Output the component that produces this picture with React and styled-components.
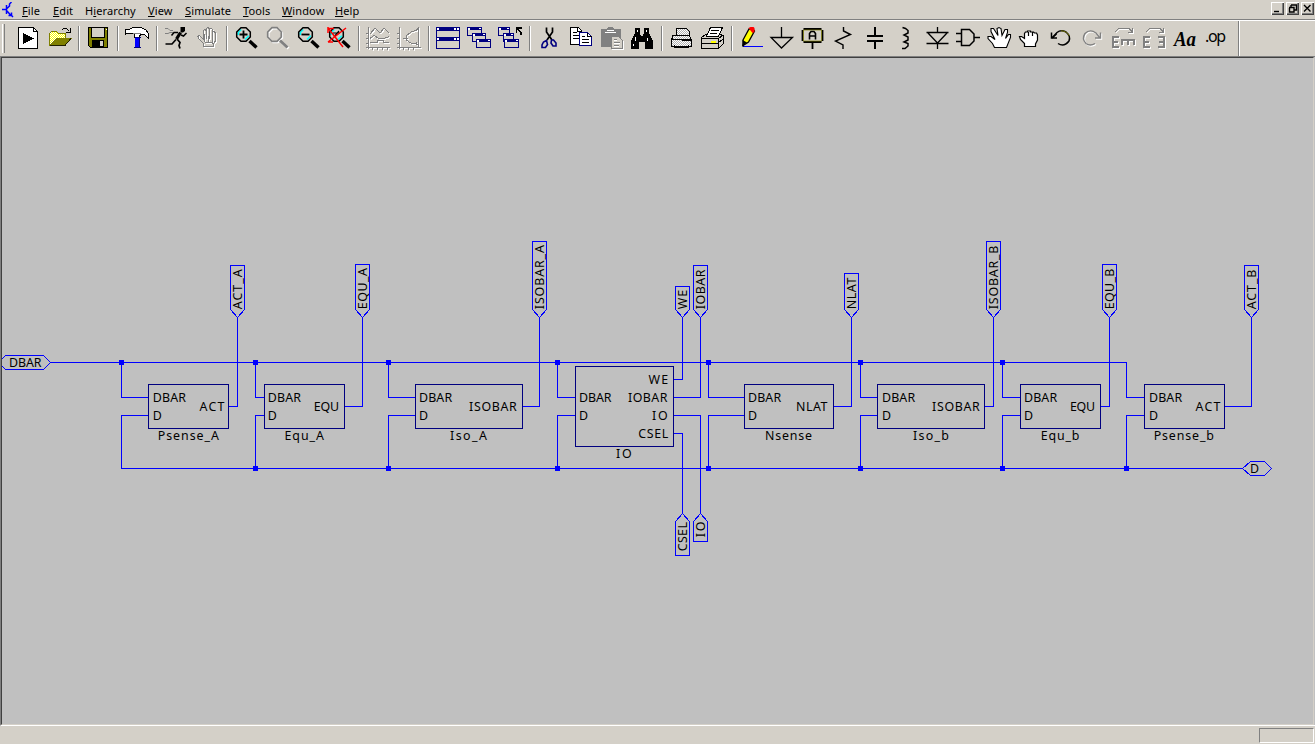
import React from "react";
import styled, { createGlobalStyle } from "styled-components";

const Global = createGlobalStyle`
  * { box-sizing: border-box; }
  html, body { margin: 0; overflow: hidden; background: #d4d0c8; }
  svg { display: block; }
`;

const Window = styled.div`
  width: 1315px;
  height: 744px;
  display: flex;
  flex-direction: column;
  background: #d4d0c8;
  color: #000;
  font-family: "Noto Sans", sans-serif;
`;
const MenuBar = styled.header`
  height: 20px;
  flex: none;
  display: flex;
  align-items: center;
  padding: 1px 1px 0 2px;
  border-bottom: 1px solid #808080;
`;
const AppIcon = styled.svg`
  width: 12px;
  height: 17px;
  margin-right: 8px;
`;
const MenuItem = styled.span`
  width: ${(p) => p.$w}px;
  margin-right: ${(p) => p.$gap}px;
  font-size: 11px;
  line-height: 16px;
  padding-top: 2px;
  letter-spacing: 0.12px;
  white-space: nowrap;
  u { text-underline-offset: 1px; text-decoration-thickness: 1px; }
`;
const Controls = styled.div`
  display: flex;
  gap: 2px;
  margin-left: auto;
  margin-bottom: 3px;
`;
const ControlButton = styled.button`
  width: 13px;
  height: 13px;
  padding: 0;
  border: 0;
  background: #d4d0c8;
  box-shadow: inset 1px 1px #fff, inset -1px -1px #404040, inset -2px -2px #808080;
`;
const Toolbar = styled.nav`
  height: 36px;
  flex: none;
  display: flex;
  align-items: center;
  padding-left: 2px;
  border-top: 1px solid #fff;
`;
const Grip = styled.i`
  width: 3px;
  height: 29px;
  margin-right: 8px;
  border-left: 1px solid #fff;
  border-right: 1px solid #808080;
`;
const Separator = styled.i`
  width: 2px;
  height: 25px;
  margin: 0 3px;
  border-left: 1px solid #808080;
  border-right: 1px solid #fff;
`;
const ToolButton = styled.button`
  width: 31px;
  height: 28px;
  display: flex;
  align-items: center;
  padding: 0 0 2px 3px;
  border: 0;
  background: none;
`;
const Glyph = styled.svg`
  width: 25px;
  height: 24px;
  overflow: visible;
`;
const BandEnd = styled.i`
  width: 2px;
  align-self: stretch;
  margin-left: 6px;
  border-left: 1px solid #808080;
  border-right: 1px solid #fff;
`;
const Workspace = styled.main`
  height: 670px;
  flex: none;
  background: #c0c0c0;
  border-top: 1px solid #808080;
  border-left: 1px solid #808080;
  border-bottom: 1px solid #fff;
`;
const Sheet = styled.div`
  height: 668px;
  width: 1313px;
  border: solid #404040;
  border-width: 1px 0 0 1px;
  border-right: 1px solid #d4d0c8;
  border-bottom: 1px solid #d4d0c8;
`;
const StatusBar = styled.footer`
  flex: 1;
  display: flex;
  justify-content: flex-end;
  padding: 2px 1px 0 0;
`;
const StatusPane = styled.div`
  width: 55px;
  height: 15px;
  border: 1px solid;
  border-color: #808080 #fff #fff #808080;
`;

const K = "#000", G = "#808080", W = "#fff", N = "#000080", O = "#808000";
const S = ({ d, c = K, f = "none", w = 1 }) => <path d={d} stroke={c} fill={f} strokeWidth={w} />;
const F = ({ d, c = K }) => <path d={d} fill={c} />;
const Etched = ({ d, w = 1 }) => (
  <>
    <g transform="translate(1 1)"><S d={d} c={W} w={w} /></g>
    <S d={d} c={G} w={w} />
  </>
);
const Dither = ({ id, a, b }) => (
  <pattern id={id} width="2" height="2" patternUnits="userSpaceOnUse">
    <path d="M0 0h2v2h-2z" fill={a} /><path d="M0 0h1v1h-1zM1 1h1v1h-1z" fill={b} />
  </pattern>
);
const LENS = "M7 1.7h5l4.3 4.3v5l-4.3 4.3h-5l-4.3-4.3v-5z";
const Lens = ({ children }) => (
  <>
    <S d="M4.3 9v-2.5l3-3M11 13.5l3.8-3.8" c="#00ffff" w={1.6} />
    <S d={LENS} w={1.5} />
    <S d="M15.5 15l7 6.5" w={3.4} />
    {children}
  </>
);
const MiniWindow = ({ x, y, w = 14 }) => (
  <g transform={`translate(${x} ${y})`}>
    <rect x=".5" y=".5" width={w} height="8" fill="#d4d0c8" stroke={N} />
    <path d={`M0 0h${w + 1}v3h-${w + 1}z`} fill={N} />
    <path d={`M1 1h2v2h-2zM${w - 2} 1h2v1h-2z`} fill={W} />
  </g>
);

const icons = {
  run: <><S d="M2.5 1.5h15l4 4v17h-19z" f={W} /><S d="M17.5 1.5v4h4" /><F d="M7 7v11l11-5.5z" /></>,
  open: <>
    <defs><Dither id="fold" a="#ffff00" b="#ffffff" /></defs>
    <path d="M2.5 19.5v-12l2-2h5l2 2h7v5h-9z" fill="url(#fold)" stroke="#808000" />
    <S d="M3 19.5L9.5 12.5h14.5l-6 7z" f={O} c={O} /><S d="M3 19.5h15l6-7" c="#202000" />
    <S d="M14.5 4.5l2-2h3l3 3M23.5 2v4.5h-5" />
  </>,
  save: <><S d="M2.5 1.5h19v20h-17l-2-2z" f={O} /><F d="M6 2h13v9h-13z" c="#d4d0c8" /><F d="M20 3h1v1h-1z" c={W} /><S d="M5.5 2v9h13v-9" /><F d="M6 14h12v8h-12z" /><F d="M14 15h3v5h-3z" c="#d4d0c8" /></>,
  hammer: <>
    <F d="M10 11h5v11h-5z" c="#0000ff" /><S d="M14.5 11v11M9 21.500h7" c={N} />
    <path d="M.5 3.500h4l3-2h8l5 2l3 4v5l-3-3l-2-1.500h-3l-1 3h-5.500v-3l-3-1h-3l-2.500 1z" fill={W} stroke={K} />
    <S d="M8 7.500h8" c={G} /><S d="M9.500 11.500h6" c={N} />
  </>,
  runner: <><S d="M1 2.5h3l2 2h3M1 7.5h3l2-1h3" c={G} /><F d="M16.5 1h4.5v4l-2 1.5h-2.5z" /><S d="M16.5 6.5l-4 6.500" w={3.2} /><S d="M14 6.5H10l-2.5 3M17 9l2.500 1l3-3" w={1.5} /><S d="M13 13l3 3.5l-1 3l1 3M12 13.5l-4 4.5H1.500" w={1.7} /></>,
  halt: <Etched d="M8.5 20.5v-3l-4-4l-2-3l2-1l4 4v-9l1-1l2 1v8v-10l1-1l2 1v10v-9l1.5-1l1.5 1v10v-7l1.5-1l1 1v9l-2 3v2zM8 20h10M10 16h8M9.5 8v8M13.5 10v7M17.5 12v6" />,
  zoomIn: <Lens><S d="M9.5 4.5v8M5.5 8.5h8" w={1.8} /></Lens>,
  zoomPan: <><Etched d={LENS} w={1.7} /><Etched d="M15 14.5l7.5 7" w={3} /></>,
  zoomOut: <Lens><S d="M5.5 8.5h8" w={1.8} /></Lens>,
  zoomFit: <><Lens /><S d="M6 7h7M7 11l5-6" w={1.2} /><S d="M1 2l15 19M19 2L1 16M1 1v6M1 2.5h6M1 16h5" c="#ff0000" w={1.5} /></>,
  plot: <Etched d="M2.5 1v22M0 21.5h24M0 17.5h3M0 12.5h3M0 7.5h3M4 8l5-6l5 5l4-5l5 5M4 12.5l4-3l5 3h5l5-2M4 16.5h7v-2h6v2h6M6.5 22v2M11.5 22v2M16.5 22v2M21.5 22v2" />,
  fft: <Etched d="M2.5 1v22M0 21.5h24M0 17.5h3M0 12.5h3M0 7.5h3M22 3.500l-8 2.500l-5 4v4l5 3l8 1.500M21.5 1v20M19 4.500l2.500-3M19 16.500l2.500 3M6 12.500h5M6.5 22v2M11.5 22v2M16.5 22v2" />,
  tile: <><S d="M.5 1.5h23v21h-23z" c={N} /><F d="M0 1h24v4h-24zM0 11h24v4h-24z" c={N} /><F d="M1 2h2v2h-2zM18 2h2v2h-2zM21 2h2v2h-2zM1 12h2v2h-2zM18 12h2v2h-2zM21 12h2v2h-2z" c={W} /></>,
  cascade: <><MiniWindow x={0} y={1} /><MiniWindow x={5} y={7} w={13} /><MiniWindow x={9} y={13} /></>,
  closeAll: <><MiniWindow x={0} y={1} w={11} /><MiniWindow x={5} y={7} w={10} /><MiniWindow x={6} y={13} /><S d="M18.5 7v-5h5M19 2.5l4 4v2" w={1.4} /></>,
  cut: <><S d="M9.5 1.5v4.5l5.5 8M15.5 1.5v4.5l-5.5 8" w={1.7} /><S d="M9.5 14.5l-3 1.5l-1.5 3v2.5h3.5l2-3zM14.5 14h2l2.5 3v3h-3l-2-3z" c={N} w={1.6} /></>,
  copy: <><S d="M2.5 1.5h8l3 3v14h-11z" f={W} /><S d="M9.5 1.5v4h4M5 6.5h4M5 9.5h6M5 12.5h6" /><S d="M11.5 6.5h8l4 4v9h-12z" f={W} c={N} /><S d="M19.5 6.5v4h4M14 10.5h3M14 13.5h7M14 16.5h7" c={K} /></>,
  paste: <><F d="M2 3h6l1-2h5l1 2h7v18h-20z" c={G} /><S d="M6 6.5h11M8 4.5h7" c={W} /><S d="M12.5 10.5h7l4 4v8h-11z" c={G} f="#d4d0c8" /><S d="M13 23.5h11v-9M15 14.5h3M15 17.5h6M15 20.5h5" c={W} /><S d="M15 13.5h3M15 16.5h6M15 19.5h5" c={G} /></>,
  find: <><F d="M5 2h5v5l1 3h2l1-3v-5h5v5l4 8v8h-8v-7h-6v7h-8v-8l4-8z" /><S d="M7.5 4v2M16.5 4v2M5.5 11v4M17.5 12v3M3.5 18v2" c={W} /></>,
  print: <><defs><Dither id="paper" a="#ffffff" b="#b0b0b0" /></defs><path d="M7.5 9.5v-7h10l3 3v4zM3.5 13.5v-4h16l2 2v3zM2.5 13.5h20v7h-20z" fill="url(#paper)" stroke="#000" /><S d="M3.5 10.5l-1 3v5h-1M5.5 18.5v3h14v-3" /></>,
  printSetup: <><S d="M1.5 11.5l4-3h15l3 1v8l-5 5h-17z" f="#d4d0c8" /><S d="M1.5 12.5h17l5-4M1.5 17.5h16l6-5M18.5 12v10" /><S d="M6.5 10.5l4-9h12l-4 9z" f={W} /><S d="M11 4.5h8M10 7.5h7" /><S d="M11 16h5" c="#ffff00" w={2} /></>,
  wire: <><S d="M4 20.5h20" c="#0000ff" /><path d="M4 14l6-11h4l1.500 2l-6 11l-4.500 3z" fill="#ffff00" stroke="#000" strokeWidth="1.3" /><F d="M9.5 2l2-1h3l1 1v4l-2 1z" c="#ff0000" /><F d="M3.5 14l4.500 2.500l-3 2.500v1.500h-2z" /></>,
  ground: <S d="M11.5 1v10M1 11.5h21.500l-11 10.500z" w={1.3} />,
  label: <><S d="M2.5 3h18M2.5 16h18M1.5 4v11M21.5 4v11M11.5 17v6" w={1.8} /><S d="M2.500 4h18v11h-18z" c={O} w={0.7} /><S d="M8.5 13.500v-6l1.500-2h3l1.500 2v6M9 10h5" w={1.6} /></>,
  resistor: <S d="M11.5 1v4l7 3.5l-15 6.500l7.500 4v4" w={1.4} />,
  capacitor: <><S d="M11.5 1v8M11.5 16v7" w={2} /><F d="M4 9h16v2h-16zM4 14h16v2h-16z" /></>,
  inductor: <S d="M8.5 1.500l3 1l2.500 2v2.500l-4 2l4 2v3l-4 2l4 1.500v2.500l-3 2.500h-3" w={1.5} />,
  diode: <S d="M12.5 1v5M1.5 6.5h22M1.5 17.5h22M3 7l9.500 10l9.500-10M12.5 17v6" w={1.3} />,
  gate: <S d="M5.5 3.5h8l4.500 4.500v7l-4.500 4.500h-8zM0 7.5h5M0 15.5h5M18 11.5h6" w={1.5} />,
  move: <S d="M7.5 21.5l-2-4l-4.500-5v-2h3l4 3l-4-8v-3h2.500l4.500 7l-1-7l2-1l2 1l1 7l3-6h2.500v3l-2 6l3-4h2v3l-4 10z" f={W} w={1.1} />,
  drag: <S d="M6.500 20.500v-3l-4-4l-1-3h2l3 2v-5l1-1.500h2v-1h3v1h3l1 1h2l1 2v5l-2 4v2.500zM10.500 6v4M14.500 6v4" f={W} w={1.2} />,
  undo: <><S d="M3 12L8 6.500Q12 3.500 17 6Q22 10 20 15Q15 21.500 9 17.500" w={1.5} /><S d="M2.500 6.500v5.500h5.500M3 12l4.500-4" w={1.5} /><S d="M12 4.800Q18 5 20.500 10" c={O} w={0.8} /></>,
  redo: <Etched d="M20 12L16 7Q10 2.500 5 7.500Q1.500 13 6 17.500Q10 20.500 15 17.500M20.500 6.500v5.500h-5.500" w={1.4} />,
  rotate: <><Etched d="M4 6l4-4h10l3 4M21.5 2v4.5h-5" /><Etched d="M8 11H2v10H8M2 16H7" w={2} /><Etched d="M10 14h14M11 19v-5M17 14v5M23 14v5" w={2} /></>,
  mirror: <><Etched d="M4 6l4-4h10l3 4M21.5 2v4.500h-5" /><Etched d="M8 11H2v10H8M2 16H7" w={2} /><Etched d="M16 11h6v10H16M17 16h5" w={2} /></>,
  text: <text x="1" y="19.5" fontFamily="Liberation Serif" fontSize="20" fontWeight="bold" fontStyle="italic" textLength="22" lengthAdjust="spacingAndGlyphs">Aa</text>,
  op: <text x="1" y="16" fontFamily="Noto Sans" fontSize="16" textLength="21">.op</text>,
};
const smooth = new Set([
  "runner", "zoomIn", "zoomPan", "zoomOut", "zoomFit", "cut", "wire", "ground", "label",
  "resistor", "inductor", "diode", "gate", "move", "drag", "undo", "redo",
]);
const groups = [
  ["run", "open"], ["save"], ["hammer"], ["runner", "halt"],
  ["zoomIn", "zoomPan", "zoomOut", "zoomFit"], ["plot", "fft"],
  ["tile", "cascade", "closeAll"], ["cut", "copy", "paste", "find"],
  ["print", "printSetup"],
  ["wire", "ground", "label", "resistor", "capacitor", "inductor", "diode", "gate", "move", "drag", "undo", "redo", "rotate", "mirror", "text", "op"],
];
const menus = [
  ["F", "ile", "", 19, 12], ["E", "dit", "", 20, 12], ["i", "erarchy", "H", 51, 12],
  ["V", "iew", "", 26, 11], ["S", "imulate", "", 47, 11], ["T", "ools", "", 29, 10],
  ["W", "indow", "", 42, 11], ["H", "elp", "", 26, 0],
];

const Wire = styled.path`
  fill: none;
  stroke: #0000ff;
  shape-rendering: crispEdges;
`;
const Block = styled.rect`
  fill: none;
  stroke: #000080;
  shape-rendering: crispEdges;
`;
const Label = styled.text`
  font: 12.4px "Noto Sans", sans-serif;
  fill: #000;
`;
const T = ({ x, y, to, children }) => (
  <Label x={x - 0.8} y={y} textLength={to - x + 1.2}>{children}</Label>
);
/* [bus tap x, left, right, [output pin, from, to], label x, [name, from, to], output wire x] */
const cells = [
  [121, 148, 228, ["ACT", 200.3, 224], 153.6, ["Psense_A", 158.5, 218.5], 237],
  [255, 264, 344, ["EQU", 314.6, 338.6], 268.6, ["Equ_A", 285.3, 323.5], 362],
  [388, 415, 522, ["ISOBAR", 469.9, 516.3], 419.8, ["Iso_A", 450.8, 486.5], 539],
  [708, 744, 833, ["NLAT", 796.8, 827], 748.8, ["Nsense", 765.8, 811.5], 851],
  [860, 877, 984, ["ISOBAR", 932.9, 979.3], 882.8, ["Iso_b", 913.9, 948.5], 993],
  [1002, 1020, 1100, ["EQU", 1070.8, 1094.6], 1024.8, ["Equ_b", 1041.5, 1079], 1109],
  [1126, 1144, 1224, ["ACT", 1196.3, 1220], 1149.8, ["Psense_b", 1154.5, 1213.5], 1251],
];
const tags = [
  ["ACT_A", 237, 265, 269.7], ["EQU_A", 362, 264, 268.5], ["ISOBAR_A", 539, 241, 245.5],
  ["WE", 682, 286, 290.3], ["IOBAR", 700, 265, 270], ["NLAT", 851, 273, 278],
  ["ISOBAR_B", 993, 241, 246], ["EQU_B", 1109, 264, 269], ["ACT_B", 1251, 265, 270],
];
const Upright = ({ x, y, len, children }) => (
  <Label transform={`translate(${x} ${y}) rotate(-90)`} textLength={len + 1.2}>{children}</Label>
);

function Schematic() {
  return (
    <svg width="1311" height="666" viewBox="2 58 1311 666">
      <Wire d="M50 362.5H1126.5V397.5H1144M121.5 468.5H1243" />
      {cells.map(([tap, l, r, out, lx, name, ox], i) => (
        <g key={i}>
          {i < 6 && <Wire d={`M${tap + 0.5} 362V397.5H${l}`} />}
          <Wire d={`M${l} 415.5H${tap + 0.5}V469M${r} 406.5H${ox + 0.5}V317`} />
          <Block x={l + 0.5} y="384.5" width={r - l} height="44" />
          <T x={lx} y={402} to={lx + 31.9}>DBAR</T>
          <T x={lx} y={420} to={lx + 8}>D</T>
          <T x={out[1]} y={411} to={out[2]}>{out[0]}</T>
          <T x={name[1]} y={440} to={name[2]}>{name[0]}</T>
        </g>
      ))}
      <Wire d="M557.5 362V397.5H575M575 415.5H557.5V468M673 379.5H682.5V317M673 397.5H700.5V317M673 415.5H700.5V514M673 433.5H682.5V514" />
      <Block x="575.5" y="366.5" width="98" height="80" />
      <T x={579.8} y={402} to={611}>DBAR</T>
      <T x={579.8} y={420} to={587.7}>D</T>
      <T x={649.3} y={384} to={667.8}>WE</T>
      <T x={628.9} y={402} to={667}>IOBAR</T>
      <T x={652.9} y={420} to={667.3}>IO</T>
      <T x={639} y={438} to={667.8}>CSEL</T>
      <T x={616.9} y={458} to={631.3}>IO</T>
      {[121, 255, 388, 557, 708, 860, 1002].map((x) => <rect key={x} x={x - 2} y="360" width="5" height="5" fill="#0000ff" />)}
      {[255, 388, 557, 708, 860, 1002, 1126].map((x) => <rect key={x} x={x - 2} y="466" width="5" height="5" fill="#0000ff" />)}
      {tags.map(([t, x, top, end]) => (
        <g key={t}>
          <Upright x={x + 5} y={309.2} len={308.4 - end}>{t}</Upright>
          <Wire d={`M${x - 6.5} 309.5V${top + 0.5}H${x + 7.5}V309.5L${x + 0.5} 317.5Z`} />
        </g>
      ))}
      {[["CSEL", 682, 555, 551.3, 28], ["IO", 700, 541, 537.3, 14.6]].map(([t, x, bottom, y, len]) => (
        <g key={t}>
          <Upright x={x + 5} y={y} len={len}>{t}</Upright>
          <Wire d={`M${x - 6.5} 521.5V${bottom + 0.5}H${x + 7.5}V521.5L${x + 0.5} 513.5Z`} />
        </g>
      ))}
      <Wire d="M-1.5 362.5L5.5 355.5H43.5L50.5 362.5L43.5 369.5H5.5ZM1242.5 468.5L1250.5 461.5H1264.5L1271.5 468.5L1264.5 475.5H1250.5Z" />
      <T x={9.8} y={367} to={41}>DBAR</T>
      <T x={1250.9} y={473} to={1258.7}>D</T>
    </svg>
  );
}

export default function App() {
  return (
    <>
      <Global />
      <Window>
        <MenuBar>
          <AppIcon viewBox="0 0 12 17">
            <path d="M0 7.500h4M4.500 3v9M5 6.500l2.500-2.500v-2l2-2M5 9l4 4.500M6.500 13.500h3v-3M9.500 13.500l1.500 1.500" fill="none" stroke="#0000ff" strokeWidth="1.5" />
          </AppIcon>
          {menus.map(([key, rest, before, w, gap]) => (
            <MenuItem key={key + rest} $w={w} $gap={gap}>{before}<u>{key}</u>{rest}</MenuItem>
          ))}
          <Controls>
            {["M3 9.5h5", "M5 3h5.500v5h-2.500M5 3v2M3 5.500h5v4.500h-4.500v-4", "M3 3l6.500 6.500M9.500 3l-6.500 6.500"].map((d) => (
              <ControlButton key={d}>
                <svg width="13" height="13"><path d={d} fill="none" stroke="#000" strokeWidth="1.4" /></svg>
              </ControlButton>
            ))}
          </Controls>
        </MenuBar>
        <Toolbar>
          <Grip />
          {groups.map((g, i) => (
            <React.Fragment key={i}>
              {i > 0 && <Separator />}
              {g.map((n) => (
                <ToolButton key={n} aria-label={n}>
                  <Glyph viewBox="0 0 25 24" shapeRendering={smooth.has(n) ? "auto" : "crispEdges"}>{icons[n]}</Glyph>
                </ToolButton>
              ))}
            </React.Fragment>
          ))}
          <BandEnd />
        </Toolbar>
        <Workspace>
          <Sheet><Schematic /></Sheet>
        </Workspace>
        <StatusBar><StatusPane /></StatusBar>
      </Window>
    </>
  );
}
